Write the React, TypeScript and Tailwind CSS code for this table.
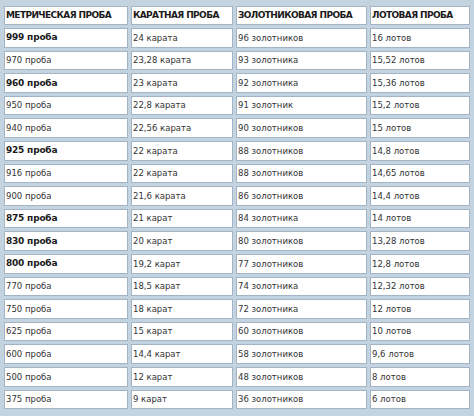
import React from "react";

const rows: [string, string, string, string, boolean][] = [
  ["999 проба", "24 карата", "96 золотников", "16 лотов", true],
  ["970 проба", "23,28 карата", "93 золотника", "15,52 лотов", false],
  ["960 проба", "23 карата", "92 золотника", "15,36 лотов", true],
  ["950 проба", "22,8 карата", "91 золотник", "15,2 лотов", false],
  ["940 проба", "22,56 карата", "90 золотников", "15 лотов", false],
  ["925 проба", "22 карата", "88 золотников", "14,8 лотов", true],
  ["916 проба", "22 карата", "88 золотников", "14,65 лотов", false],
  ["900 проба", "21,6 карата", "86 золотников", "14,4 лотов", false],
  ["875 проба", "21 карат", "84 золотника", "14 лотов", true],
  ["830 проба", "20 карат", "80 золотников", "13,28 лотов", true],
  ["800 проба", "19,2 карат", "77 золотников", "12,8 лотов", true],
  ["770 проба", "18,5 карат", "74 золотника", "12,32 лотов", false],
  ["750 проба", "18 карат", "72 золотника", "12 лотов", false],
  ["625 проба", "15 карат", "60 золотников", "10 лотов", false],
  ["600 проба", "14,4 карат", "58 золотников", "9,6 лотов", false],
  ["500 проба", "12 карат", "48 золотников", "8 лотов", false],
  ["375 проба", "9 карат", "36 золотников", "6 лотов", false],
];

const cell =
  "h-[19.6px] border border-[#a3b4c4] bg-white px-[1px] py-0 text-left align-middle whitespace-nowrap overflow-hidden";
const head = cell + " font-bold text-[9px] tracking-[-0.6px] text-[#1a1a1a]";

export default function App() {
  return (
    <div
      className="w-[474px] h-[416px] bg-[#c3d3e0] overflow-hidden pt-[2.5px]"
      style={{ fontFamily: '"DejaVu Sans", Verdana, sans-serif' }}
    >
      <table className="w-[472px] table-fixed border-separate border-spacing-[3px] ml-[1px] text-[8.5px] leading-none text-[#333]">
        <colgroup>
          <col className="w-[124px]" />
          <col className="w-[102px]" />
          <col className="w-[131px]" />
          <col className="w-[100px]" />
        </colgroup>
        <thead>
          <tr>
            <th className={head}>МЕТРИЧЕСКАЯ ПРОБА</th>
            <th className={head}>КАРАТНАЯ ПРОБА</th>
            <th className={head}>ЗОЛОТНИКОВАЯ ПРОБА</th>
            <th className={head}>ЛОТОВАЯ ПРОБА</th>
          </tr>
        </thead>
        <tbody>
          {rows.map((r, i) => (
            <tr key={i}>
              <td
                className={
                  cell +
                  (r[4]
                    ? " font-bold text-[9px] tracking-[-0.2px] text-[#1a1a1a]"
                    : "")
                }
              >
                {r[0]}
              </td>
              <td className={cell}>{r[1]}</td>
              <td className={cell}>{r[2]}</td>
              <td className={cell}>{r[3]}</td>
            </tr>
          ))}
        </tbody>
      </table>
    </div>
  );
}
